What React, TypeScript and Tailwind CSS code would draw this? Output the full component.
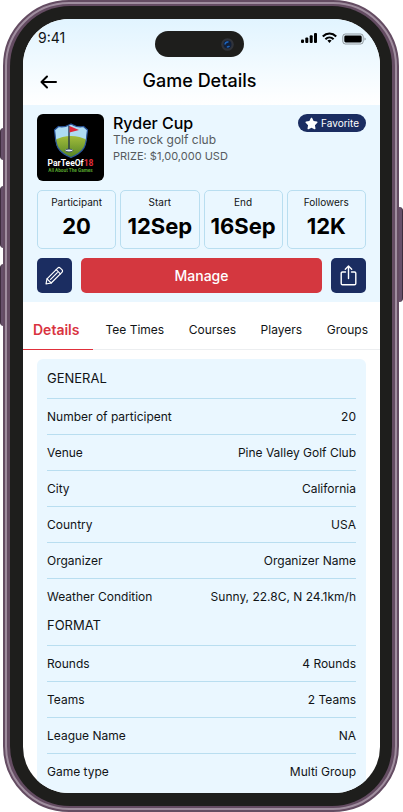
import { FaStar } from 'react-icons/fa'

const stats = [
  { label: 'Participant', value: '20' },
  { label: 'Start', value: '12Sep' },
  { label: 'End', value: '16Sep' },
  { label: 'Followers', value: '12K' },
]

const tabs = ['Tee Times', 'Courses', 'Players', 'Groups']

const general = [
  ['Number of participent', '20'],
  ['Venue', 'Pine Valley Golf Club'],
  ['City', 'California'],
  ['Country', 'USA'],
  ['Organizer', 'Organizer Name'],
  ['Weather Condition', 'Sunny, 22.8C, N 24.1km/h'],
]

const format = [
  ['Rounds', '4 Rounds'],
  ['Teams', '2 Teams'],
  ['League Name', 'NA'],
  ['Game type', 'Multi Group'],
]

const shieldPath =
  'M34 10C30 12.5 26 13.3 21.5 12.5L17.5 16C19.5 28 16.5 36 34 43.5C51.5 36 48.5 28 50.5 16L46.5 12.5C42 13.3 38 12.5 34 10Z'

function StatusIcons() {
  return (
    <svg width="66" height="14" viewBox="0 0 66 14" aria-hidden="true">
      <rect x="0" y="8.5" width="3" height="3.5" rx="1" />
      <rect x="4.3" y="6.5" width="3" height="5.5" rx="1" />
      <rect x="8.7" y="4.3" width="3" height="7.7" rx="1" />
      <rect x="13" y="2" width="3" height="10" rx="1" />
      <g fill="none" stroke="#000" strokeWidth="2.1">
        <path d="M21.8 5.4C25.6 1.6 31.4 1.6 35.2 5.4" />
        <path d="M24.4 8.2C26.8 5.9 30.2 5.9 32.6 8.2" />
      </g>
      <path d="M26.4 9.6Q28.5 8 30.6 9.6L28.5 11.9Z" />
      <rect x="41.8" y="3" width="20.4" height="10" rx="2.6" fill="none" stroke="#000" strokeOpacity=".38" />
      <rect x="43.3" y="4.5" width="17.4" height="7" rx="1.4" />
      <path d="M63.5 6.5v3q1.2-.4 1.2-1.5t-1.2-1.5" fillOpacity=".4" />
    </svg>
  )
}

function GameLogo() {
  return (
    <svg width="67" height="67" viewBox="0 0 67 67" role="img" aria-label="ParTeeOf18" className="shrink-0 rounded-md">
      <defs>
        <clipPath id="shield">
          <path d={shieldPath} />
        </clipPath>
        <linearGradient id="grass" x1="0" y1="0" x2="0" y2="1">
          <stop offset="0" stopColor="#a3bd3b" />
          <stop offset="1" stopColor="#4d7f24" />
        </linearGradient>
      </defs>
      <rect width="67" height="67" />
      <g clipPath="url(#shield)">
        <rect width="67" height="45" fill="#aedcf3" />
        <path d="M16 27Q34 17 52 27V45H16Z" fill="url(#grass)" />
      </g>
      <path d={shieldPath} fill="none" stroke="#28549b" strokeWidth="1.2" />
      <path d="M32 12V36" stroke="#1c2c48" strokeWidth="1.3" />
      <path d="M32.5 12L42 16L32.5 18.5Z" fill="#df2638" />
      <ellipse cx="32" cy="36.5" rx="3.8" ry="1.4" fill="#e4edf4" stroke="#243b60" strokeWidth=".8" />
      <text x="33.5" y="52" textAnchor="middle" fontFamily="Roboto, sans-serif" fontWeight="700" fontSize="8.5" fill="#fff">
        ParTeeOf<tspan fill="#e12e3b">18</tspan>
      </text>
      <text x="33.5" y="58" textAnchor="middle" fontFamily="Roboto, sans-serif" fontWeight="700" fontSize="4.7" fill="#57a52e">
        All About The Games
      </text>
    </svg>
  )
}

function Section({ title, rows }: { title: string; rows: string[][] }) {
  return (
    <section>
      <h2 className="border-b border-[#b9def0] pb-[10px] text-[13px] leading-5">{title}</h2>
      <dl>
        {rows.map(([label, value]) => (
          <div key={label} className="flex h-9 items-center justify-between border-b border-[#b9def0] text-xs last:border-b-0">
            <dt>{label}</dt>
            <dd>{value}</dd>
          </div>
        ))}
      </dl>
    </section>
  )
}

export default function App() {
  return (
    <div className="relative h-screen overflow-hidden bg-white pr-1 pl-[3px] font-['Inter','Liberation_Sans',sans-serif] text-[#111416]">
      {/* Side keys */}
      <div className="absolute top-32 left-0 h-8 w-2 rounded-l-sm border-l border-[#3d2c3d] bg-[#67506a]" />
      <div className="absolute top-[186px] left-0 h-[62px] w-2 rounded-l-sm border-l border-[#3d2c3d] bg-[#67506a]" />
      <div className="absolute top-[264px] left-0 h-[62px] w-2 rounded-l-sm border-l border-[#3d2c3d] bg-[#67506a]" />
      <div className="absolute top-[207px] right-0 h-[95px] w-2 rounded-r-sm border-r border-[#3d2c3d] bg-[#67506a]" />

      {/* Phone body */}
      <div className="relative h-full rounded-[66px] border-2 border-[#644c62] bg-[#644c62]">
        <div className="h-full rounded-[64px] border-2 border-[#a08e9f] bg-[#644c62] px-[3px] py-[2px]">
          <div className="h-full rounded-[60px] bg-[#1e1e1c] py-[13px] pr-3 pl-[13px]">
            <div className="relative h-full overflow-hidden rounded-[46px] bg-white">
              <div className="absolute top-3 left-[132px] flex h-[26px] w-[89px] items-center justify-end rounded-full bg-[#1e1e1c] pr-[10px]">
                <svg width="13" height="13" viewBox="0 0 13 13" aria-hidden="true">
                  <circle cx="6.5" cy="6.5" r="6.3" fill="#30333a" />
                  <circle cx="6.5" cy="6.5" r="4" fill="#11203a" />
                  <path d="M4 6.5Q4.5 3.5 7.5 4M6 8.5Q7 9.5 8.5 8" fill="none" stroke="#1e65bd" strokeWidth="1.5" />
                </svg>
              </div>

              <header className="bg-linear-to-b from-[#e1f4ff] to-white">
                <div className="flex h-[38px] items-center justify-between pr-[13px] pl-[15px]">
                  <span className="text-sm">9:41</span>
                  <StatusIcons />
                </div>
                <div className="relative flex h-12 items-center justify-center pr-1">
                  <button aria-label="Back" className="absolute left-[17px]">
                    <svg width="18" height="16" viewBox="0 0 18 16" fill="none" stroke="#000" strokeWidth="2" strokeLinecap="round" strokeLinejoin="round" aria-hidden="true">
                      <path d="M16 9H2M7 3.5L1.5 9L7 14.5" />
                    </svg>
                  </button>
                  <h1 className="text-lg font-medium text-black">Game Details</h1>
                </div>
              </header>

              <section className="bg-[#eaf7ff] px-[14px] pt-[9px] pb-[9px]">
                <div className="flex gap-[9px]">
                  <GameLogo />
                  <div className="flex-1">
                    <h2 className="text-base leading-[18px] font-medium text-black">Ryder Cup</h2>
                    <p className="text-xs leading-4 text-[#565b5e]">The rock golf club</p>
                    <p className="text-[11px] leading-4 text-[#565b5e]">PRIZE: $1,00,000 USD</p>
                  </div>
                  <button className="flex h-[18px] items-center gap-[3px] rounded-full bg-[#1b2d61] px-[7px] text-[10px] text-white">
                    <FaStar size={13} aria-hidden="true" />
                    Favorite
                  </button>
                </div>

                <dl className="mt-[9px] grid grid-cols-4 gap-1">
                  {stats.map(stat => (
                    <div key={stat.label} className="flex h-[59px] flex-col items-center rounded-[5px] border border-[#b9def0] pt-[3px]">
                      <dt className="text-[10px] leading-4">{stat.label}</dt>
                      <dd className="text-[22px] leading-8 font-bold text-black">{stat.value}</dd>
                    </div>
                  ))}
                </dl>

                <div className="mt-[9px] flex gap-[9px]">
                  <button aria-label="Edit" className="flex h-[35px] w-[35px] items-center justify-center rounded-[5px] bg-[#1b2d61]">
                    <svg width="19" height="19" viewBox="0 0 19 19" fill="none" stroke="#fff" strokeWidth="1.2" strokeLinejoin="round" strokeLinecap="round" aria-hidden="true">
                      <path d="M1 18L2 12.8L12.7 2.1Q14 .8 15.3 2.1L16.9 3.7Q18.2 5 16.9 6.3L6.2 17Z" />
                      <path d="M2 12.8L6.2 17M5.6 13.4L12.3 6.7M11.2 3.6L15.4 7.8" />
                    </svg>
                  </button>
                  <button className="h-[35px] flex-1 rounded-[5px] bg-[#d4373f] text-sm font-medium text-white">Manage</button>
                  <button aria-label="Share" className="flex h-[35px] w-[35px] items-center justify-center rounded-[5px] bg-[#1b2d61]">
                    <svg width="17" height="21" viewBox="0 0 17 21" fill="none" stroke="#fff" strokeWidth="1.4" strokeLinejoin="round" strokeLinecap="round" aria-hidden="true">
                      <path d="M5.5 7H2.5Q1.2 7 1.2 8.3V18.5Q1.2 19.8 2.5 19.8H14.5Q15.8 19.8 15.8 18.5V8.3Q15.8 7 14.5 7H11.5" />
                      <path d="M8.5 13.5V1M5.3 4.2L8.5 1L11.7 4.2" />
                    </svg>
                  </button>
                </div>
              </section>

              <nav className="flex h-12 text-xs">
                <a href="#details" className="flex flex-col text-sm font-semibold text-[#d9333f]">
                  <span className="flex flex-1 items-center pt-2 pr-[14px] pl-[10px]">Details</span>
                  <span className="h-px bg-[#e0303b]" />
                </a>
                <div className="flex flex-1 justify-between border-b border-[#eceef0] px-3">
                  {tabs.map(tab => (
                    <a key={tab} href="#" className="flex items-center pt-2">
                      {tab}
                    </a>
                  ))}
                </div>
              </nav>

              <main className="mx-[14px] mt-[9px] rounded-md bg-[#eaf7ff] px-[10px] pt-[9px] pb-4">
                <Section title="GENERAL" rows={general} />
                <Section title="FORMAT" rows={format} />
              </main>
            </div>
          </div>
        </div>
      </div>
    </div>
  )
}
